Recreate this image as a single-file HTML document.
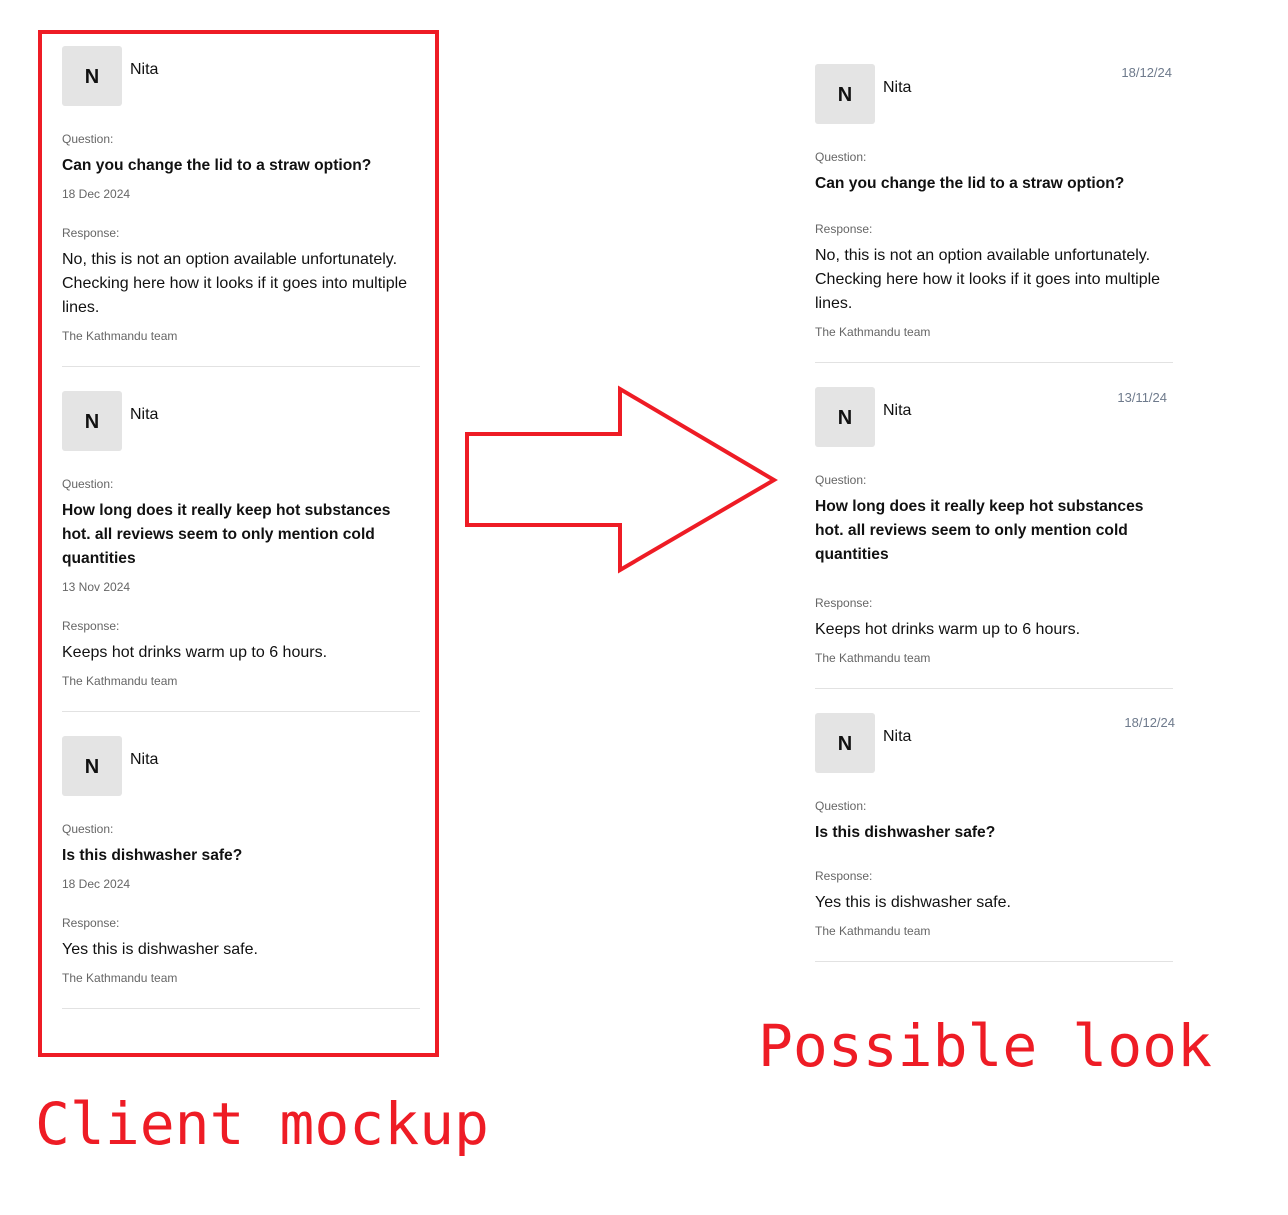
<!DOCTYPE html>
<html><head><meta charset="utf-8"><style>
body{margin:0;width:1288px;height:1215px;background:#fff;position:relative;overflow:hidden;font-family:"Liberation Sans",Arial,sans-serif;color:#111}
.t{position:absolute;white-space:nowrap;line-height:24px;height:24px;transform:translateY(2px)}
.s{font-size:12px;color:#666}
.q{font-size:15.6px;font-weight:bold;color:#111}
.r{font-size:16px;color:#111}
.n{font-size:16px;color:#111}
.d{font-size:13px;color:#6e7a8c}
.av{position:absolute;width:60px;height:60px;background:#e4e4e4;border-radius:3px;font-weight:bold;font-size:20px;line-height:62px;text-align:center;color:#111}
.hr{position:absolute;height:1px;background:#e2e2e2}
.big{position:absolute;font-family:"DejaVu Sans Mono","Liberation Mono",monospace;font-size:58px;color:#ee1c25;white-space:nowrap;line-height:70px}
</style></head><body>
<div style="position:absolute;left:38px;top:30px;width:393px;height:1019px;border:4px solid #ee1c25"></div>

<div class="av" style="left:62px;top:46px">N</div>
<div class="t n" style="left:130px;top:56px">Nita</div>
<div class="t s" style="left:62px;top:125px">Question:</div>
<div class="t q" style="left:62px;top:152px">Can you change the lid to a straw option?</div>
<div class="t s" style="left:62px;top:180px">18 Dec 2024</div>
<div class="t s" style="left:62px;top:219px">Response:</div>
<div class="t r" style="left:62px;top:246px">No, this is not an option available unfortunately.</div>
<div class="t r" style="left:62px;top:270px">Checking here how it looks if it goes into multiple</div>
<div class="t r" style="left:62px;top:294px">lines.</div>
<div class="t s" style="left:62px;top:322px">The Kathmandu team</div>
<div class="hr" style="left:62px;top:366px;width:358px"></div>

<div class="av" style="left:62px;top:391px">N</div>
<div class="t n" style="left:130px;top:401px">Nita</div>
<div class="t s" style="left:62px;top:470px">Question:</div>
<div class="t q" style="left:62px;top:497px">How long does it really keep hot substances</div>
<div class="t q" style="left:62px;top:521px">hot. all reviews seem to only mention cold</div>
<div class="t q" style="left:62px;top:545px">quantities</div>
<div class="t s" style="left:62px;top:573px">13 Nov 2024</div>
<div class="t s" style="left:62px;top:612px">Response:</div>
<div class="t r" style="left:62px;top:639px">Keeps hot drinks warm up to 6 hours.</div>
<div class="t s" style="left:62px;top:667px">The Kathmandu team</div>
<div class="hr" style="left:62px;top:711px;width:358px"></div>

<div class="av" style="left:62px;top:736px">N</div>
<div class="t n" style="left:130px;top:746px">Nita</div>
<div class="t s" style="left:62px;top:815px">Question:</div>
<div class="t q" style="left:62px;top:842px">Is this dishwasher safe?</div>
<div class="t s" style="left:62px;top:870px">18 Dec 2024</div>
<div class="t s" style="left:62px;top:909px">Response:</div>
<div class="t r" style="left:62px;top:936px">Yes this is dishwasher safe.</div>
<div class="t s" style="left:62px;top:964px">The Kathmandu team</div>
<div class="hr" style="left:62px;top:1008px;width:358px"></div>

<div class="big" style="left:35px;top:1089px">Client mockup</div>

<svg style="position:absolute;left:0;top:0" width="1288" height="1215"><polygon points="467,434 620,434 620,389 774,480 620,570 620,525 467,525" fill="none" stroke="#ee1c25" stroke-width="4"/></svg>

<div class="av" style="left:815px;top:64px">N</div>
<div class="t n" style="left:883px;top:74px">Nita</div>
<div class="t d" style="left:1060px;width:112px;text-align:right;top:59px">18/12/24</div>
<div class="t s" style="left:815px;top:143px">Question:</div>
<div class="t q" style="left:815px;top:170px">Can you change the lid to a straw option?</div>
<div class="t s" style="left:815px;top:215px">Response:</div>
<div class="t r" style="left:815px;top:242px">No, this is not an option available unfortunately.</div>
<div class="t r" style="left:815px;top:266px">Checking here how it looks if it goes into multiple</div>
<div class="t r" style="left:815px;top:290px">lines.</div>
<div class="t s" style="left:815px;top:318px">The Kathmandu team</div>
<div class="hr" style="left:815px;top:362px;width:358px"></div>

<div class="av" style="left:815px;top:387px">N</div>
<div class="t n" style="left:883px;top:397px">Nita</div>
<div class="t d" style="left:1055px;width:112px;text-align:right;top:384px">13/11/24</div>
<div class="t s" style="left:815px;top:466px">Question:</div>
<div class="t q" style="left:815px;top:493px">How long does it really keep hot substances</div>
<div class="t q" style="left:815px;top:517px">hot. all reviews seem to only mention cold</div>
<div class="t q" style="left:815px;top:541px">quantities</div>
<div class="t s" style="left:815px;top:589px">Response:</div>
<div class="t r" style="left:815px;top:616px">Keeps hot drinks warm up to 6 hours.</div>
<div class="t s" style="left:815px;top:644px">The Kathmandu team</div>
<div class="hr" style="left:815px;top:688px;width:358px"></div>

<div class="av" style="left:815px;top:713px">N</div>
<div class="t n" style="left:883px;top:723px">Nita</div>
<div class="t d" style="left:1063px;width:112px;text-align:right;top:709px">18/12/24</div>
<div class="t s" style="left:815px;top:792px">Question:</div>
<div class="t q" style="left:815px;top:819px">Is this dishwasher safe?</div>
<div class="t s" style="left:815px;top:862px">Response:</div>
<div class="t r" style="left:815px;top:889px">Yes this is dishwasher safe.</div>
<div class="t s" style="left:815px;top:917px">The Kathmandu team</div>
<div class="hr" style="left:815px;top:961px;width:358px"></div>

<div class="big" style="left:758px;top:1011px">Possible look</div>
</body></html>
